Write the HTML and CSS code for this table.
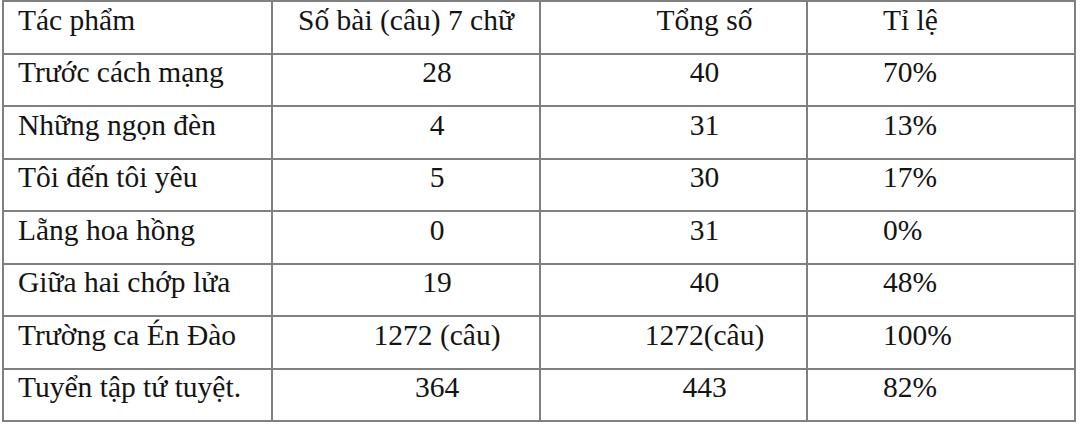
FILE: index.html
```html
<!DOCTYPE html>
<html lang="vi">
<head>
<meta charset="utf-8">
<title>Bảng thống kê</title>
<link rel="stylesheet" href="styles.css">
</head>
<body>
<table class="stats">
  <tr class="head">
    <td class="c1">Tác phẩm</td>
    <td class="c2">Số bài (câu) 7 chữ</td>
    <td class="c3">Tổng số</td>
    <td class="c4">Tỉ lệ</td>
  </tr>
  <tr>
    <td class="c1">Trước cách mạng</td>
    <td class="c2">28</td>
    <td class="c3">40</td>
    <td class="c4">70%</td>
  </tr>
  <tr>
    <td class="c1">Những ngọn đèn</td>
    <td class="c2">4</td>
    <td class="c3">31</td>
    <td class="c4">13%</td>
  </tr>
  <tr>
    <td class="c1">Tôi đến tôi yêu</td>
    <td class="c2">5</td>
    <td class="c3">30</td>
    <td class="c4">17%</td>
  </tr>
  <tr>
    <td class="c1">Lẵng hoa hồng</td>
    <td class="c2">0</td>
    <td class="c3">31</td>
    <td class="c4">0%</td>
  </tr>
  <tr>
    <td class="c1">Giữa hai chớp lửa</td>
    <td class="c2">19</td>
    <td class="c3">40</td>
    <td class="c4">48%</td>
  </tr>
  <tr>
    <td class="c1">Trường ca Én Đào</td>
    <td class="c2">1272 (câu)</td>
    <td class="c3">1272(câu)</td>
    <td class="c4">100%</td>
  </tr>
  <tr>
    <td class="c1">Tuyển tập tứ tuyệt.</td>
    <td class="c2">364</td>
    <td class="c3">443</td>
    <td class="c4">82%</td>
  </tr>
</table>
</body>
</html>
```

FILE: styles.css
```css
html, body {
  margin: 0;
  padding: 0;
  background: #ffffff;
}

body {
  overflow: hidden;
  font-family: "Liberation Serif", "Times New Roman", serif;
  color: #141414;
}

.stats {
  margin-left: 2px;
  width: 1074px;
  table-layout: fixed;
  border-collapse: separate;
  border-spacing: 0;
  border-top: 2px solid #808080;
  border-left: 2px solid #808080;
}

.stats td {
  box-sizing: border-box;
  height: 52.5px;
  padding: 1.5px 0 0 0;
  vertical-align: top;
  font-size: 29.5px;
  line-height: normal;
  white-space: nowrap;
  border-right: 2px solid #808080;
  border-bottom: 2px solid #808080;
}

.stats .c1 {
  width: 269px;
  text-align: left;
  padding-left: 14px;
}

.stats .c2 {
  width: 268px;
  text-align: center;
  padding-left: 62px;
}

.stats .c3 {
  width: 267px;
  text-align: center;
  padding-left: 62px;
}

.stats .c4 {
  width: 268px;
  text-align: left;
  padding-left: 75px;
}

.stats .head .c2 {
  padding-left: 0;
}
```
